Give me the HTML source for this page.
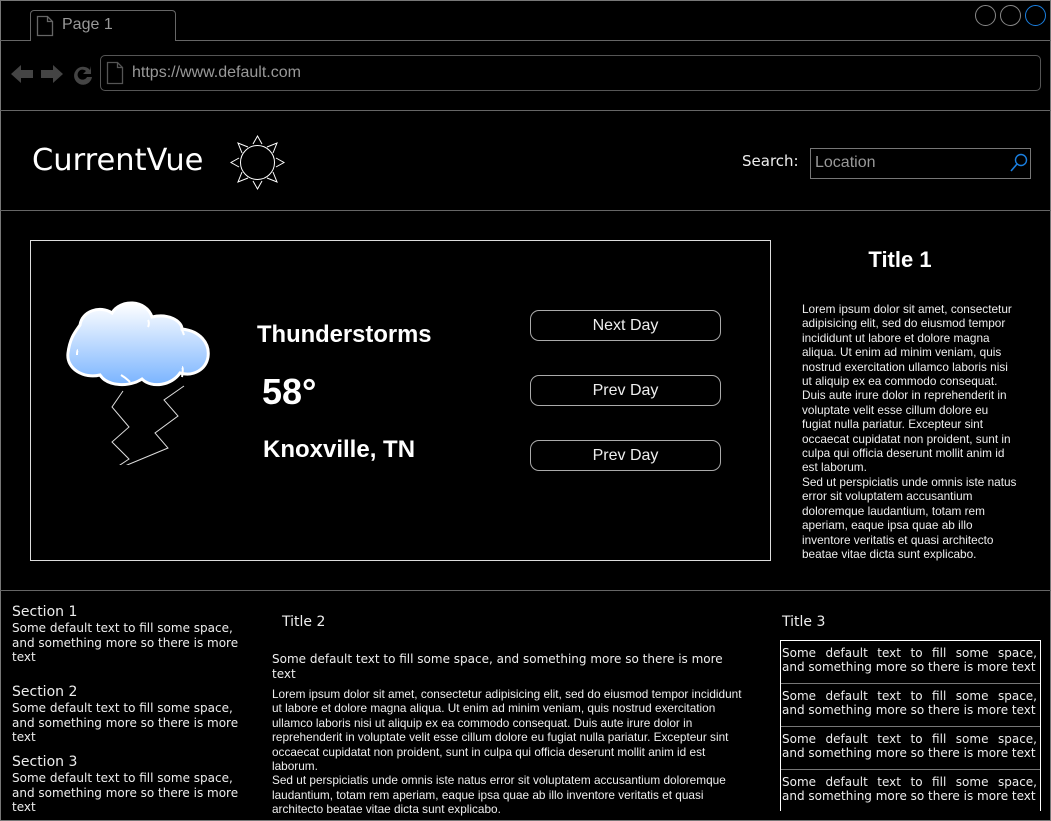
<!DOCTYPE html>
<html><head><meta charset="utf-8"><style>
*{margin:0;padding:0;box-sizing:border-box}
body{width:1051px;height:821px;background:#000;position:relative;overflow:hidden;font-family:"Liberation Sans",sans-serif;color:#fff}
.a{position:absolute}
.dv{font-family:"DejaVu Sans",sans-serif}
.hl{position:absolute;left:0;width:1051px;height:1px;background:#666}
.btn{position:absolute;left:530px;width:191px;height:31px;border:1px solid #aaa;border-radius:9px;text-align:center;font-size:16px;line-height:29px;color:#eee}
.sec h{display:block;font-size:14px;line-height:17px;color:#eee}
.sec p{font-size:12px;line-height:14.6px;color:#eee;width:235px}
.t3 div{height:43px;border-bottom:1px solid #777;font-size:12px;line-height:14.3px;padding:5px 3px 0 1px;color:#eee;white-space:nowrap}
.t3 span{display:block;text-align:justify;text-align-last:justify}
</style></head><body>
<div class="a" style="left:0;top:0;width:1051px;height:821px;border:1px solid #777"></div>
<div class="a" style="left:30px;top:10px;width:146px;height:31px;border:1px solid #666;border-bottom:none;border-radius:4px 4px 0 0;background:#000"></div>
<svg class="a" style="left:36px;top:15px" width="18" height="22"><path d="M1.5 1.5h10l5 5v14h-15z M11.5 1.5v5h5" fill="none" stroke="#666" stroke-width="1.3"/></svg>
<div class="a" style="left:62px;top:16px;font-size:16px;color:#999">Page 1</div>
<div class="a" style="left:0;top:40px;width:30px;height:1px;background:#666"></div>
<div class="a" style="left:176px;top:40px;width:875px;height:1px;background:#666"></div>
<div class="a" style="left:975px;top:5px;width:21px;height:21px;border:1px solid #888;border-radius:50%"></div>
<div class="a" style="left:1000px;top:5px;width:21px;height:21px;border:1px solid #888;border-radius:50%"></div>
<div class="a" style="left:1025px;top:5px;width:21px;height:21px;border:1px solid #1a7fe0;border-radius:50%"></div>
<svg class="a" style="left:10px;top:62px" width="88" height="26"><path d="M1 12l10-9v5h12v8H11v5z" fill="#444"/><path d="M53 12l-10-9v5H31v8h12v5z" fill="#444"/><path d="M80 8a9 9 0 1 0 2 7h-5a5 5 0 1 1-1-6l-3 3h8V4z" fill="#444"/></svg>
<div class="a" style="left:100px;top:55px;width:941px;height:36px;border:1px solid #555;border-radius:5px"></div>
<svg class="a" style="left:106px;top:61px" width="18" height="24"><path d="M1.5 1.5h10l5 5v16h-15z M11.5 1.5v5h5" fill="none" stroke="#555" stroke-width="1.3"/></svg>
<div class="a" style="left:132px;top:64px;font-size:16px;color:#999">https://www.default.com</div>
<div class="hl" style="top:110px"></div>
<div class="a dv" style="left:32px;top:143px;font-size:30.5px;color:#fff">CurrentVue</div>
<svg class="a" style="left:229px;top:134px" width="58" height="58"><g fill="none" stroke="#fff" stroke-width="1"><circle cx="28.5" cy="28.5" r="17"/><path d="M24 10l4.5-8 4.5 8M24 47l4.5 8 4.5-8M10 24l-8 4.5 8 4.5M47 24l8 4.5-8 4.5M13 19l-4-10 10 4M44 19l4-10-10 4M13 38l-4 10 10-4M44 38l4 10-10-4"/></g></svg>
<div class="a dv" style="left:742px;top:152px;font-size:15px;color:#eee">Search:</div>
<div class="a" style="left:810px;top:148px;width:221px;height:31px;border:1px solid #777"></div>
<div class="a" style="left:815px;top:154px;font-size:16px;color:#999">Location</div>
<svg class="a" style="left:1009px;top:152px" width="20" height="22"><circle cx="12" cy="8" r="5.5" fill="none" stroke="#1a7fe0" stroke-width="1.4"/><path d="M8 12l-6 7" stroke="#1a7fe0" stroke-width="1.6"/></svg>
<div class="hl" style="top:210px"></div>
<div class="a" style="left:30px;top:240px;width:741px;height:321px;border:1px solid #ddd"></div>
<svg class="a" style="left:60px;top:295px" width="160" height="170"><defs><linearGradient id="g" x1="0" y1="0" x2="0" y2="1"><stop offset="0" stop-color="#fff"/><stop offset="1" stop-color="#7ab4ff"/></linearGradient></defs>
<path d="M20 30c2-14 20-20 32-12 8-14 34-14 40 4 16-4 30 4 30 12 18 2 28 14 26 28-2 12-14 20-28 16-8 12-28 16-38 6-12 8-34 8-42-4-16 4-34-6-32-22s8-22 12-28z" fill="url(#g)" stroke="#fff" stroke-width="3"/>
<path d="M88 32c2-4 0-7 0-7M124 40c-1-3-2-5-2-5M122 82c1-5 1-10 0-10M61 80c5 3 9 7 9 7M17 60c0-5 1-5 1-5" fill="none" stroke="#fff" stroke-width="2"/>
<path d="M63 96L52 112l17 20-17 15 17 17-21 14 60-25-13-15 23-17-14-16 20-14" fill="none" stroke="#ddd" stroke-width="1"/></svg>
<div class="a" style="left:257px;top:321px;font-size:23.8px;font-weight:bold">Thunderstorms</div>
<div class="a" style="left:262px;top:371px;font-size:36px;font-weight:bold">58°</div>
<div class="a" style="left:263px;top:436px;font-size:24px;font-weight:bold">Knoxville, TN</div>
<div class="btn" style="top:310px">Next Day</div>
<div class="btn" style="top:375px">Prev Day</div>
<div class="btn" style="top:440px">Prev Day</div>
<div class="a" style="left:790px;top:247px;width:220px;text-align:center;font-size:22px;font-weight:bold">Title 1</div>
<div class="a" style="left:802px;top:302px;width:218px;font-size:11.8px;line-height:14.4px;color:#eee">Lorem ipsum dolor sit amet, consectetur adipisicing elit, sed do eiusmod tempor incididunt ut labore et dolore magna aliqua. Ut enim ad minim veniam, quis nostrud exercitation ullamco laboris nisi ut aliquip ex ea commodo consequat. Duis aute irure dolor in reprehenderit in voluptate velit esse cillum dolore eu fugiat nulla pariatur. Excepteur sint occaecat cupidatat non proident, sunt in culpa qui officia deserunt mollit anim id est laborum.<br>Sed ut perspiciatis unde omnis iste natus error sit voluptatem accusantium doloremque laudantium, totam rem aperiam, eaque ipsa quae ab illo inventore veritatis et quasi architecto beatae vitae dicta sunt explicabo.</div>
<div class="hl" style="top:590px"></div>
<div class="a sec dv" style="left:12px;top:604px"><h>Section 1</h><p>Some default text to fill some space, and something more so there is more text</p></div>
<div class="a sec dv" style="left:12px;top:684px"><h>Section 2</h><p>Some default text to fill some space, and something more so there is more text</p></div>
<div class="a sec dv" style="left:12px;top:754px"><h>Section 3</h><p>Some default text to fill some space, and something more so there is more text</p></div>
<div class="a dv" style="left:282px;top:614px;font-size:14px;color:#eee">Title 2</div>
<div class="a dv" style="left:272px;top:652px;width:462px;font-size:12px;line-height:14.6px;color:#eee">Some default text to fill some space, and something more so there is more text</div>
<div class="a" style="left:272px;top:687px;width:479px;font-size:11.8px;line-height:14.4px;color:#eee">Lorem ipsum dolor sit amet, consectetur adipisicing elit, sed do eiusmod tempor incididunt ut labore et dolore magna aliqua. Ut enim ad minim veniam, quis nostrud exercitation ullamco laboris nisi ut aliquip ex ea commodo consequat. Duis aute irure dolor in reprehenderit in voluptate velit esse cillum dolore eu fugiat nulla pariatur. Excepteur sint occaecat cupidatat non proident, sunt in culpa qui officia deserunt mollit anim id est laborum.<br>Sed ut perspiciatis unde omnis iste natus error sit voluptatem accusantium doloremque laudantium, totam rem aperiam, eaque ipsa quae ab illo inventore veritatis et quasi architecto beatae vitae dicta sunt explicabo.</div>
<div class="a dv" style="left:782px;top:614px;font-size:14px;color:#eee">Title 3</div>
<div class="a t3 dv" style="left:780px;top:640px;width:261px;height:171px;border:1px solid #fff;border-bottom:none;overflow:hidden">
<div><span>Some default text to fill some space,</span>and something more so there is more text</div>
<div><span>Some default text to fill some space,</span>and something more so there is more text</div>
<div><span>Some default text to fill some space,</span>and something more so there is more text</div>
<div><span>Some default text to fill some space,</span>and something more so there is more text</div>
</div>
</body></html>
